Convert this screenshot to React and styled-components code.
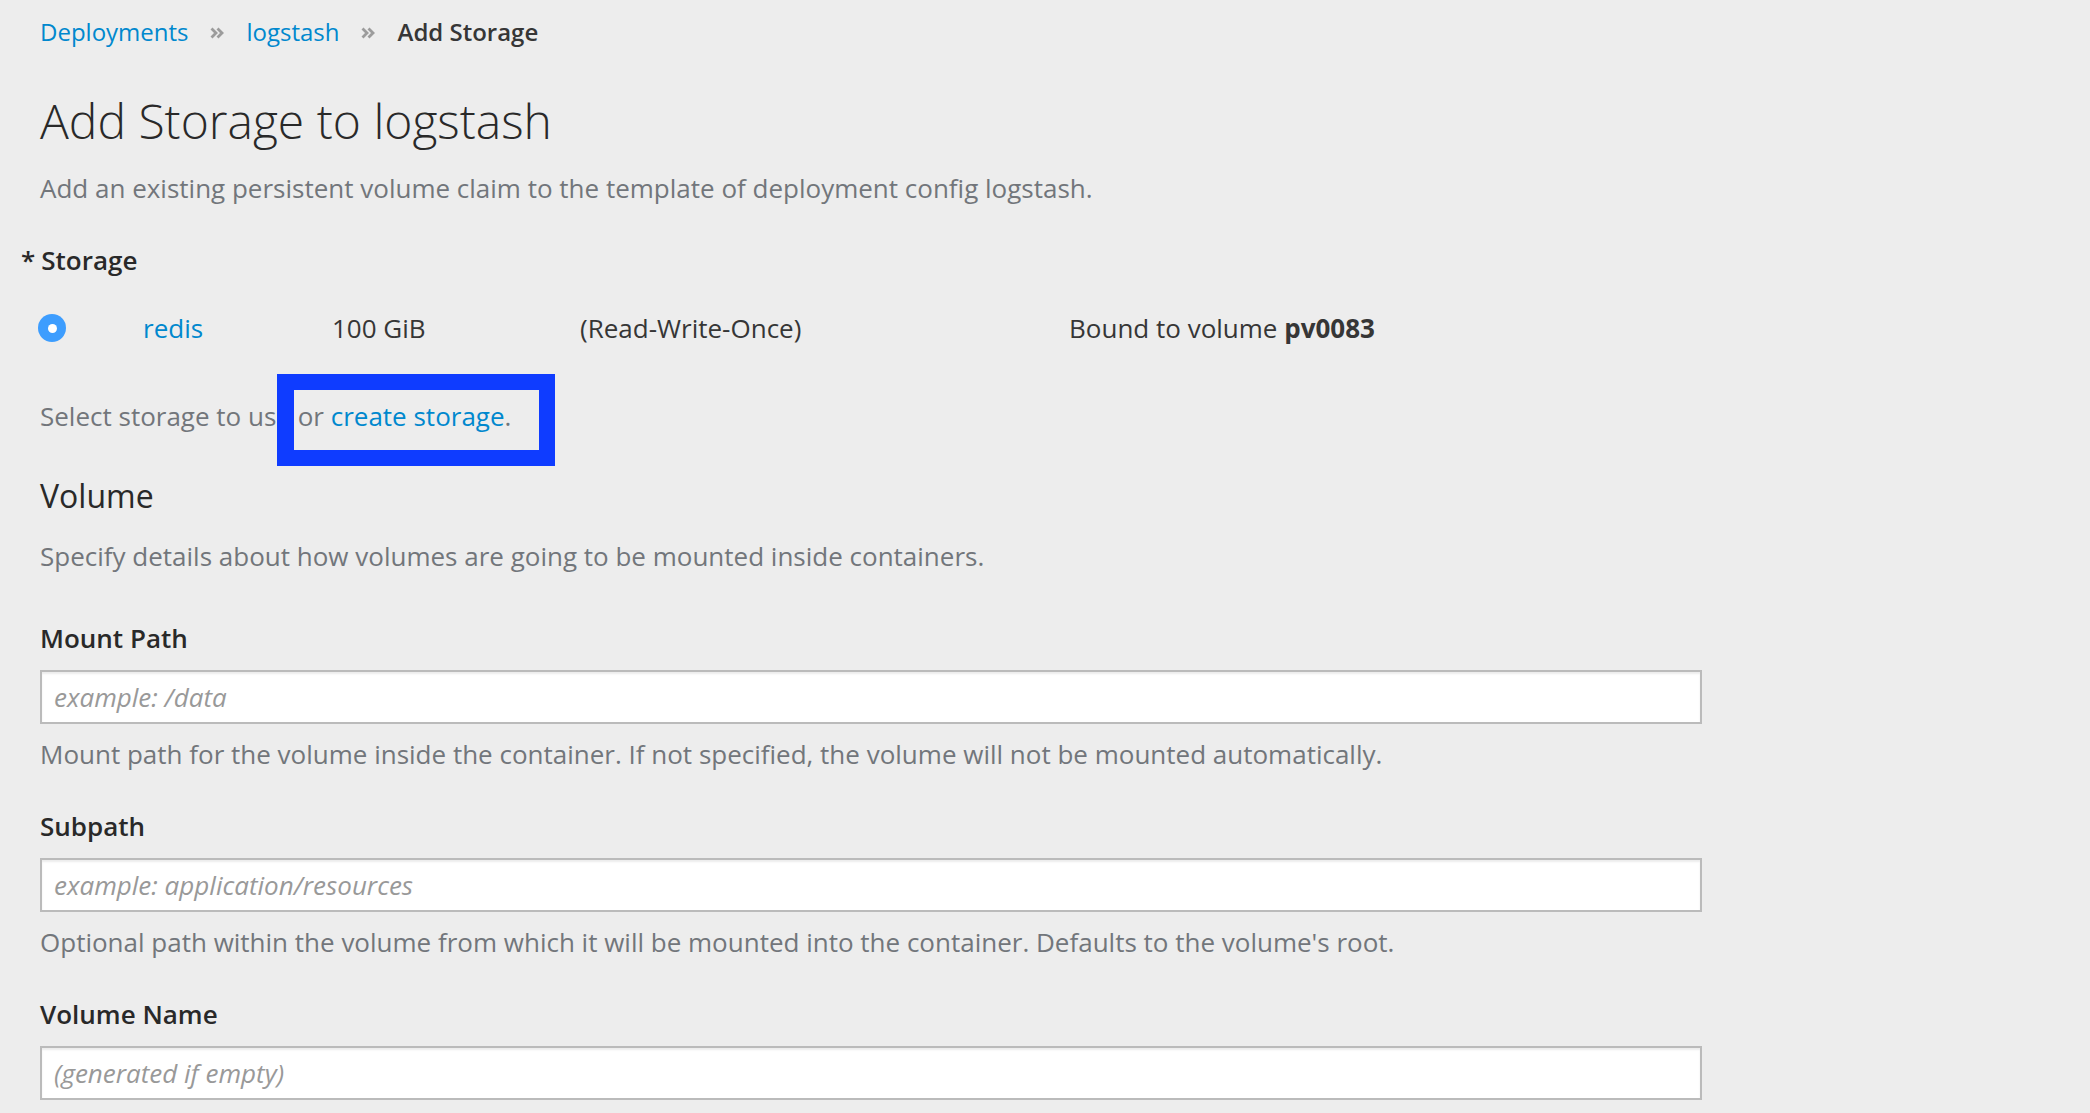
import React from "react";
import styled, { createGlobalStyle } from "styled-components";

const Global = createGlobalStyle`
  html, body { margin: 0; padding: 0; background: #ededed; }
  body {
    font-family: "Open Sans", "Liberation Sans", sans-serif;
    font-size: 26px;
    line-height: 40px;
    color: #363636;
  }
`;

const Page = styled.div`
  padding: 12px 0 40px 40px;
  min-height: 1113px;
  box-sizing: border-box;
`;

const Breadcrumb = styled.nav`
  display: flex;
  align-items: center;
  height: 40px;
  font-size: 24px;
`;

const Crumb = styled.a`
  color: ${(p) => (p.$active ? "#363636" : "#0088ce")};
  font-weight: ${(p) => (p.$active ? 600 : 400)};
  text-decoration: none;
`;

const Sep = styled.svg`
  width: 14px;
  height: 14px;
  margin: 2px 23px 0 21px;
  display: block;
`;

const Title = styled.h1`
  margin: 42px 0 0;
  font-size: 48px;
  font-weight: 300;
  line-height: 53px;
  color: #292929;
`;

const Lead = styled.p`
  margin: ${(p) => p.$mt || "21px"} 0 0;
  color: #72767b;
`;

const StorageLabel = styled.div`
  margin: 32px 0 0 -19px;
  font-weight: 600;
  color: #292929;
`;

const Required = styled.span`
  margin-right: 6px;
`;

const StorageRow = styled.div`
  margin-top: 28px;
  display: grid;
  grid-template-columns: 103px 189px 248px 489px auto;
  align-items: center;
  height: 40px;
`;

const Radio = styled.span`
  width: 28px;
  height: 28px;
  margin-left: -2px;
  border-radius: 50%;
  background: #3d9dfe;
  display: flex;
  align-items: center;
  justify-content: center;
  &::after {
    content: "";
    width: 9px;
    height: 9px;
    border-radius: 50%;
    background: #fff;
  }
`;

const Link = styled.a`
  color: #0088ce;
  text-decoration: none;
`;

const Cell = styled.span`
  color: #363636;
`;

const Strong = styled.strong`
  font-weight: 700;
`;

const HelpLine = styled.p`
  position: relative;
  margin: 48px 0 0;
  color: #72767b;
`;

const Highlight = styled.span`
  position: absolute;
  left: 237px;
  top: -22px;
  width: 278px;
  height: 92px;
  box-sizing: border-box;
  border: 17px solid #0f3cff;
  border-width: 16px 16px 16px 17px;
  pointer-events: none;
`;

const SectionTitle = styled.h3`
  margin: 42px 0 0;
  font-size: 32px;
  font-weight: 400;
  line-height: 36px;
  color: #292929;
`;

const Field = styled.div`
  display: flex;
  flex-direction: column;
  margin-top: ${(p) => p.$mt || "32px"};
`;

const Label = styled.label`
  font-weight: 600;
  color: #292929;
`;

const Input = styled.input`
  margin-top: 12px;
  width: 1662px;
  height: 54px;
  box-sizing: border-box;
  border: 2px solid #bbbbbb;
  background: #fff;
  box-shadow: inset 0 2px 2px rgba(3, 3, 3, 0.075);
  padding: 0 12px;
  font-family: "Open Sans", "Liberation Sans", sans-serif;
  font-size: 26px;
  color: #363636;
  outline: none;
  &::placeholder {
    color: #999999;
    font-style: italic;
  }
`;

const Help = styled.div`
  margin-top: 10px;
  color: #72767b;
`;

const Chevrons = () => (
  <Sep viewBox="0 0 14 14" aria-hidden="true">
    <path d="M1.5 2.5 L6 7 L1.5 11.5 M7.5 2.5 L12 7 L7.5 11.5" fill="none" stroke="#9c9c9c" strokeWidth="2.8" />
  </Sep>
);

const fields = [
  {
    label: "Mount Path",
    placeholder: "example: /data",
    help: "Mount path for the volume inside the container. If not specified, the volume will not be mounted automatically.",
    mt: "42px",
  },
  {
    label: "Subpath",
    placeholder: "example: application/resources",
    help: "Optional path within the volume from which it will be mounted into the container. Defaults to the volume's root.",
  },
  {
    label: "Volume Name",
    placeholder: "(generated if empty)",
  },
];

export default function App() {
  return (
    <>
      <Global />
      <Page>
        <Breadcrumb>
          <Crumb href="#">Deployments</Crumb>
          <Chevrons />
          <Crumb href="#">logstash</Crumb>
          <Chevrons />
          <Crumb $active>Add Storage</Crumb>
        </Breadcrumb>
        <Title>Add Storage to logstash</Title>
        <Lead>Add an existing persistent volume claim to the template of deployment config logstash.</Lead>
        <StorageLabel>
          <Required>*</Required>Storage
        </StorageLabel>
        <StorageRow>
          <Radio />
          <Link href="#">redis</Link>
          <Cell>100 GiB</Cell>
          <Cell>(Read-Write-Once)</Cell>
          <Cell>
            Bound to volume <Strong>pv0083</Strong>
          </Cell>
        </StorageRow>
        <HelpLine>
          Select storage to use or <Link href="#">create storage</Link>.
          <Highlight />
        </HelpLine>
        <SectionTitle>Volume</SectionTitle>
        <Lead $mt="22px">Specify details about how volumes are going to be mounted inside containers.</Lead>
        {fields.map((f) => (
          <Field key={f.label} $mt={f.mt}>
            <Label>{f.label}</Label>
            <Input placeholder={f.placeholder} />
            {f.help && <Help>{f.help}</Help>}
          </Field>
        ))}
      </Page>
    </>
  );
}
